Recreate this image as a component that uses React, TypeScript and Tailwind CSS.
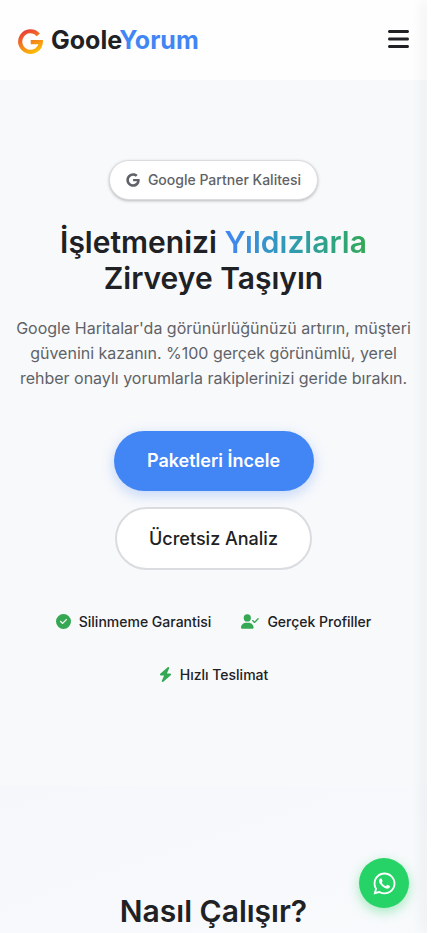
import { FaBars, FaBolt, FaCircleCheck, FaGoogle, FaUserCheck, FaWhatsapp } from "react-icons/fa6";

const features = [
  { label: "Silinmeme Garantisi", icon: <FaCircleCheck className="h-[15px] w-[15px]" /> },
  { label: "Gerçek Profiller", icon: <FaUserCheck className="h-[15px] w-[18px]" /> },
  { label: "Hızlı Teslimat", icon: <FaBolt className="h-[15px] w-[13px]" /> },
];

function Logo() {
  return (
    <a href="#" className="flex items-center gap-2 text-[25px] font-bold">
      <svg viewBox="0 0 24 24" fill="none" className="h-[25px] w-[25px]" aria-hidden="true">
        <defs>
          <linearGradient id="logo-gradient" gradientUnits="userSpaceOnUse" x1="5" y1="3" x2="15" y2="23">
            <stop offset="0" stopColor="#EA4335" />
            <stop offset="1" stopColor="#FBBC05" />
          </linearGradient>
        </defs>
        <path d="M19.5 5.6A9.9 9.9 0 1 0 21.9 12.6H12.2" stroke="url(#logo-gradient)" strokeWidth="4" />
      </svg>
      <span>
        Goole<span className="text-[#4285F4]">Yorum</span>
      </span>
    </a>
  );
}

export default function App() {
  return (
    <div lang="tr" className="flex min-h-screen bg-[#f8f9fb] font-['Inter',sans-serif] text-[#202124]">
      <div className="flex min-w-0 flex-1 flex-col">
        {/* Navbar */}
        <header className="flex h-20 items-center justify-between bg-[#fefefe] px-[18px] pt-[2px]">
          <Logo />
          <button type="button" aria-label="Menü" className="pb-1">
            <FaBars className="h-6 w-[21px]" />
          </button>
        </header>

        <main className="flex flex-1 flex-col">
          {/* Hero */}
          <section className="flex flex-col items-center px-4 pt-20 pb-[100px] text-center">
            <div className="flex h-10 items-center gap-2 rounded-full border border-[#dadce0] bg-white px-4 text-sm font-medium text-[#5f6368] shadow-[0_1px_3px_rgba(60,64,67,0.35)]">
              <FaGoogle className="h-[14px] w-[14px]" />
              Google Partner Kalitesi
            </div>

            <h1 className="mt-6 text-[30px] leading-9 font-semibold">
              İşletmenizi{" "}
              <span className="bg-gradient-to-r from-[#4285F4] to-[#34A853] bg-clip-text text-transparent">Yıldızlarla</span>
              <br />
              Zirveye Taşıyın
            </h1>

            <p className="mt-5 text-base leading-[25px] text-[#5f6368]">
              Google Haritalar'da görünürlüğünüzü artırın, müşteri güvenini kazanın. %100 gerçek görünümlü, yerel rehber onaylı
              yorumlarla rakiplerinizi geride bırakın.
            </p>

            <div className="mt-10 flex flex-col items-center gap-4">
              <a
                href="#paketler"
                className="flex h-[60px] min-w-[200px] items-center justify-center rounded-full bg-[#4285F4] px-8 text-lg font-semibold text-white shadow-[0_4px_14px_rgba(66,133,244,0.3)]"
              >
                Paketleri İncele
              </a>
              <a
                href="#analiz"
                className="flex h-[63px] min-w-[196px] items-center justify-center rounded-full border-2 border-[#dadce0] bg-white px-8 text-lg font-medium"
              >
                Ücretsiz Analiz
              </a>
            </div>

            <ul className="mt-10 flex flex-wrap justify-center gap-[30px] text-sm leading-[23px] font-medium">
              {features.map((feature) => (
                <li key={feature.label} className="flex items-center gap-2">
                  <span className="text-[#34A853]">{feature.icon}</span>
                  {feature.label}
                </li>
              ))}
            </ul>
          </section>

          {/* How it works */}
          <section className="flex-1 bg-gradient-to-br from-[#f5f7fb] to-[#f8fafc] px-4 pt-[104px] text-center">
            <h2 className="text-[30px] leading-[43px] font-semibold">Nasıl Çalışır?</h2>
          </section>
        </main>
      </div>

      {/* Edge of the closed side menu */}
      <aside className="w-1 shrink-0 bg-white shadow-[-4px_0_12px_rgba(0,0,0,0.1)]" />

      <a
        href="https://wa.me/"
        aria-label="WhatsApp"
        className="fixed right-[22px] bottom-[25px] flex h-[50px] w-[50px] items-center justify-center rounded-full bg-[#25D366] text-white shadow-[0_4px_12px_rgba(37,211,102,0.4)]"
      >
        <FaWhatsapp className="h-[25px] w-[25px]" />
      </a>
    </div>
  );
}
